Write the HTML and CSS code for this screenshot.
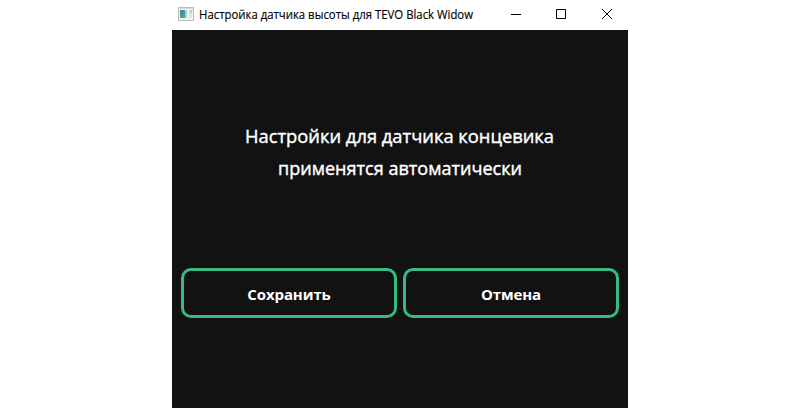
FILE: index.html
```html
<!DOCTYPE html>
<html lang="ru">
<head>
<meta charset="utf-8">
<title>Настройка датчика высоты для TEVO Black Widow</title>
<link rel="stylesheet" href="styles.css">
</head>
<body>
<main class="window">
  <header class="titlebar">
    <svg class="app-icon" width="16" height="14" viewBox="0 0 16 14">
      <defs>
        <linearGradient id="pane" x1="0" y1="0" x2="1" y2="1">
          <stop offset="0" stop-color="#4a7cab"/>
          <stop offset="1" stop-color="#4fae83"/>
        </linearGradient>
      </defs>
      <rect x="0.5" y="0.5" width="15" height="13" fill="#f1f3f4" stroke="#b9bcbf"/>
      <rect x="1" y="1" width="14" height="1" fill="#d5d8dc"/>
      <rect x="2" y="3" width="5" height="8" fill="url(#pane)"/>
      <rect x="7" y="3" width="2" height="8" fill="#a9cfca"/>
      <rect x="11" y="3" width="3" height="8" fill="#e2e5e6"/>
      <rect x="12" y="3" width="2" height="3" fill="#bccbc6"/>
    </svg>
    <svg class="title" width="290" height="22"><text x="0" y="15" textLength="274" lengthAdjust="spacingAndGlyphs">Настройка датчика высоты для TEVO Black Widow</text></svg>
    <svg class="controls" width="102" height="30" viewBox="0 0 102 30" fill="none" stroke="#000">
      <path d="M0 14.5h10M45.5 9.5h9v9h-9zM91 9l10 10M101 9l-10 10"/>
    </svg>
  </header>
  <section class="content">
    <svg class="message" width="456" height="64">
      <text x="73" y="23" textLength="309" lengthAdjust="spacingAndGlyphs">Настройки для датчика концевика</text>
      <text x="106" y="55" textLength="244" lengthAdjust="spacingAndGlyphs">применятся автоматически</text>
    </svg>
    <div class="actions">
      <button class="button">Сохранить</button>
      <button class="button">Отмена</button>
    </div>
  </section>
</main>
</body>
</html>
```
FILE: styles.css
```css
body { margin: 0; background: #fff; font-family: "Open Sans", "Noto Sans", sans-serif; }
.window { width: 456px; margin: 0 auto; }
.titlebar { display: flex; align-items: center; height: 30px; background: #fff; }
.titlebar svg { flex: none; }
.app-icon { margin: 0 0 2px 6px; }
.title { margin-left: 5px; font-size: 12px; stroke: #000; stroke-width: 0.15px; }
.controls { margin-left: 22px; }
.content { height: 378px; background: #121212; box-sizing: border-box; padding-top: 90px; }
.message { display: block; fill: #fff; font-size: 18px; stroke: #fff; stroke-width: 0.4px; }
.actions { display: flex; gap: 6px; padding: 84px 9px 0; }
.button { flex: 1; height: 50px; padding: 1px 0 0; border: 3px solid #38ba80; border-radius: 10px; background: transparent; color: #fff; font: 700 15px "Open Sans", "Noto Sans", sans-serif; letter-spacing: -0.1px; }
```
